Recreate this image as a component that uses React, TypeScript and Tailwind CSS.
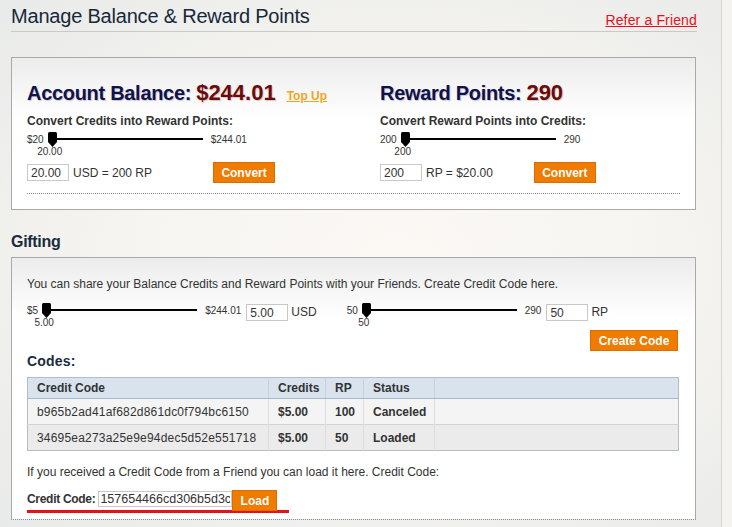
import React from "react";

const font = "font-['Liberation_Sans',Arial,sans-serif]";

function Handle() {
  return (
    <svg className="absolute left-0 top-0" width="9" height="15" viewBox="0 0 9 15">
      <path d="M1.5 0 H7.5 Q9 0 9 1.5 V10 L4.5 15 L0 10 V1.5 Q0 0 1.5 0 Z" fill="#000" />
    </svg>
  );
}

function Slider({ min, max, value }: { min: string; max: string; value: string }) {
  return (
    <div className="flex items-center h-[15px] shrink-0">
      <span className="text-[10px] leading-none mr-[4px] text-[#333]">{min}</span>
      <div className="relative w-[155px] h-[15px]">
        <div className="absolute left-[8px] right-0 top-[6px] h-[2px] bg-black" />
        <Handle />
        <span className="absolute top-[14px] left-[2px] -translate-x-1/2 text-[10px] leading-[12px] text-[#333] whitespace-nowrap">
          {value}
        </span>
      </div>
      <span className="text-[10px] leading-none ml-[8px] text-[#333]">{max}</span>
    </div>
  );
}

function OrangeButton({ label, className }: { label: string; className: string }) {
  return (
    <button
      type="button"
      className={`h-[21px] bg-[#ef7b00] border border-[#dc6e00] text-white font-bold text-[12px] leading-none ${className}`}
    >
      {label}
    </button>
  );
}

function BalanceColumn({
  title,
  amount,
  topUp,
  subtitle,
  min,
  max,
  value,
  input,
  equation,
  buttonClass,
}: {
  title: string;
  amount: string;
  topUp?: boolean;
  subtitle: string;
  min: string;
  max: string;
  value: string;
  input: string;
  equation: string;
  buttonClass: string;
}) {
  return (
    <div>
      <div className="flex items-baseline h-[26px] leading-[26px]">
        <span className="text-[20px] font-bold tracking-[-0.3px] text-[#12124a] [text-shadow:1px_1px_1px_#c4c4d4]">
          {title}
        </span>
        <span className="ml-[5px] text-[22px] font-bold text-[#6d0b0b] [text-shadow:1px_1px_1px_#d8c4c4]">{amount}</span>
        {topUp && (
          <a className="ml-[11px] text-[12px] font-bold underline text-[#f3a31c]" href="#">
            Top Up
          </a>
        )}
      </div>
      <div className="mt-[8px] text-[12px] leading-[14px] font-bold text-[#333]">{subtitle}</div>
      <div className="mt-[4px] h-[27px]">
        <Slider min={min} max={max} value={value} />
      </div>
      <div className="mt-[3px] flex items-center h-[21px]">
        <input
          readOnly
          value={input}
          className="w-[42px] h-[17px] border border-[#c8c8c8] bg-white px-[3px] text-[12px] text-[#333] outline-none"
        />
        <span className="ml-[4px] text-[12px] text-[#333]">{equation}</span>
        <OrangeButton label="Convert" className={`w-[62px] ${buttonClass}`} />
      </div>
    </div>
  );
}

const codes = [
  { code: "b965b2ad41af682d861dc0f794bc6150", credits: "$5.00", rp: "100", status: "Canceled", bg: "bg-[#f4f4f4]" },
  { code: "34695ea273a25e9e94dec5d52e551718", credits: "$5.00", rp: "50", status: "Loaded", bg: "bg-[#ebebeb]" },
];

export default function App() {
  return (
    <div className={`w-[732px] h-[527px] overflow-hidden flex ${font} text-[#333]`}>
      <div className="w-[721px] shrink-0 pl-[11px] pr-[24px] bg-[radial-gradient(ellipse_at_55%_50%,#fcf9f5_0%,#f7f5f1_45%,#e8eae9_100%)]">
        <div className="flex justify-between items-start h-[32px] border-b border-[#c8caca]">
          <h1 className="pt-[4px] text-[20px] leading-[24px] tracking-[-0.2px] text-[#17283a]">
            Manage Balance &amp; Reward Points
          </h1>
          <a href="#" className="pt-[12px] text-[14px] leading-[16px] tracking-[0.15px] underline text-[#e6111c]">
            Refer a Friend
          </a>
        </div>

        <div className="mt-[25px] w-[685px] border border-[#a9a9a9] bg-[linear-gradient(to_bottom,#ececec,#ffffff_60px)] pt-[22px] pl-[15px] pr-[15px] pb-[15px]">
          <div className="grid grid-cols-[353px_1fr]">
            <BalanceColumn
              title="Account Balance:"
              amount="$244.01"
              topUp
              subtitle="Convert Credits into Reward Points:"
              min="$20"
              max="$244.01"
              value="20.00"
              input="20.00"
              equation="USD = 200 RP"
              buttonClass="ml-[61px]"
            />
            <BalanceColumn
              title="Reward Points:"
              amount="290"
              subtitle="Convert Reward Points into Credits:"
              min="200"
              max="290"
              value="200"
              input="200"
              equation="RP = $20.00"
              buttonClass="ml-[41px]"
            />
          </div>
          <div className="mt-[10px] border-t border-dotted border-[#8a8a8a]" />
        </div>

        <h2 className="mt-[22px] text-[16px] leading-[20px] font-bold tracking-[-0.3px] text-[#1a2b3c]">Gifting</h2>

        <div className="mt-[5px] w-[685px] border border-[#a9a9a9] [border-bottom-style:dotted] border-b-[#8a8a8a] bg-[linear-gradient(to_bottom,#ececec,#ffffff_60px)] pt-[19px] pl-[15px] pr-[16px] pb-[6px]">
          <p className="text-[12px] leading-[14px] text-[#333]">
            You can share your Balance Credits and Reward Points with your Friends. Create Credit Code here.
          </p>

          <div className="mt-[12px] flex items-start h-[18px]">
            <Slider min="$5" max="$244.01" value="5.00" />
            <input
              readOnly
              value="5.00"
              className="ml-[5px] mt-[1px] w-[42px] h-[17px] border border-[#c8c8c8] bg-white px-[3px] text-[12px] text-[#333] outline-none"
            />
            <span className="ml-[3px] mt-[2px] text-[12px] leading-[14px]">USD</span>
            <div className="ml-[30px]">
              <Slider min="50" max="290" value="50" />
            </div>
            <input
              readOnly
              value="50"
              className="ml-[5px] mt-[1px] w-[42px] h-[17px] border border-[#c8c8c8] bg-white px-[3px] text-[12px] text-[#333] outline-none"
            />
            <span className="ml-[3px] mt-[2px] text-[12px] leading-[14px]">RP</span>
          </div>

          <div className="mt-[9px] flex justify-end">
            <OrangeButton label="Create Code" className="w-[88px] mr-[1px]" />
          </div>

          <h3 className="mt-[2px] text-[14px] leading-[16px] font-bold tracking-[0.2px] text-[#1a2b3c]">Codes:</h3>

          <table className="mt-[8px] w-full border-collapse border border-[#b4bcc4] text-[12px] text-[#333]">
            <thead>
              <tr className="bg-[#d8e3ee]">
                <th className="h-[21px] w-[241px] p-0 pl-[9px] text-left font-bold border-r border-b border-r-[#c6d1dc] border-b-[#a8b8c8]">Credit Code</th>
                <th className="h-[21px] w-[57px] p-0 pl-[9px] text-left font-bold border-r border-b border-r-[#c6d1dc] border-b-[#a8b8c8]">Credits</th>
                <th className="h-[21px] w-[38px] p-0 pl-[9px] text-left font-bold border-r border-b border-r-[#c6d1dc] border-b-[#a8b8c8]">RP</th>
                <th className="h-[21px] w-[71px] p-0 pl-[9px] text-left font-bold border-r border-b border-r-[#c6d1dc] border-b-[#a8b8c8]">Status</th>
                <th className="h-[21px] p-0 border-b border-b-[#a8b8c8]" />
              </tr>
            </thead>
            <tbody>
              {codes.map((c) => (
                <tr key={c.code} className={`${c.bg} border-t border-[#d2d2d2]`}>
                  <td className="h-[26px] p-0 pl-[9px] tracking-[0.2px] border-r border-[#dcdcdc]">{c.code}</td>
                  <td className="h-[26px] p-0 pl-[9px] font-bold border-r border-[#dcdcdc]">{c.credits}</td>
                  <td className="h-[26px] p-0 pl-[9px] font-bold border-r border-[#dcdcdc]">{c.rp}</td>
                  <td className="h-[26px] p-0 pl-[9px] font-bold border-r border-[#dcdcdc]">{c.status}</td>
                  <td className="h-[26px] p-0" />
                </tr>
              ))}
            </tbody>
          </table>

          <p className="mt-[14px] text-[12px] leading-[14px] text-[#333]">
            If you received a Credit Code from a Friend you can load it here. Credit Code:
          </p>

          <div className="mt-[11px] inline-flex items-start h-[23px] pr-[12px] border-b-[3px] border-[#e3121b]">
            <span className="mt-[2px] text-[12px] leading-[14px] font-bold tracking-[-0.3px] text-[#333]">Credit Code:</span>
            <input
              readOnly
              value="157654466cd306b5d3c"
              className="ml-[3px] mt-[1px] w-[134px] h-[16px] border border-[#c8c8c8] bg-white px-[1px] text-[12.5px] leading-none text-[#333] outline-none"
            />
            <OrangeButton label="Load" className="w-[45px] h-[20px]" />
          </div>
        </div>
      </div>
      <div className="flex-1 border-l border-[#d6d6d3] bg-[#f4f3f0]" />
    </div>
  );
}
